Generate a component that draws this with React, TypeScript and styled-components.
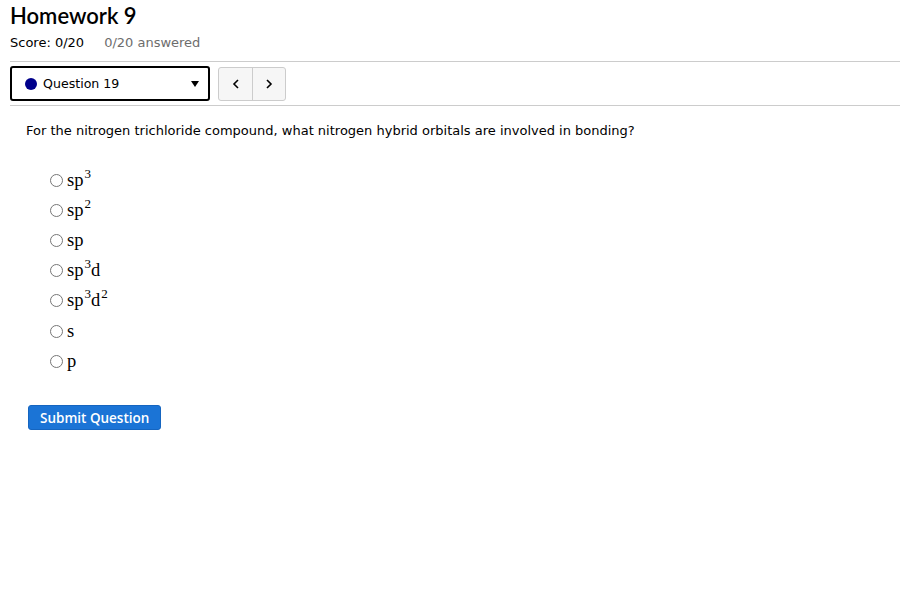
import React from "react";
import styled, { createGlobalStyle } from "styled-components";

const GlobalStyle = createGlobalStyle`
  html, body {
    margin: 0;
    padding: 0;
    background: #fff;
  }
  body {
    font-family: "DejaVu Sans", Verdana, sans-serif;
    color: #000;
  }
`;

const options = [
  { base: "sp", sup: "3" },
  { base: "sp", sup: "2" },
  { base: "sp" },
  { base: "sp", sup: "3", tail: "d" },
  { base: "sp", sup: "3", tail: "d", tailSup: "2" },
  { base: "s" },
  { base: "p" },
];

export default function App() {
  return (
    <>
      <GlobalStyle />
      <SPage>
        <STitle>Homework 9</STitle>
        <SScoreRow>
          <span>Score: 0/20</span>
          <SAnswered>0/20 answered</SAnswered>
        </SScoreRow>
        <SToolbar>
          <SSelect>
            <SDot />
            <SSelectLabel>Question 19</SSelectLabel>
            <SCaret />
          </SSelect>
          <SNavGroup>
            <SNavButton aria-label="previous">
              <svg width="8" height="10" viewBox="0 0 8 10">
                <path d="M6 1 L2 5 L6 9" fill="none" stroke="#000" strokeWidth="1.6" />
              </svg>
            </SNavButton>
            <SNavButton $last aria-label="next">
              <svg width="8" height="10" viewBox="0 0 8 10">
                <path d="M2 1 L6 5 L2 9" fill="none" stroke="#000" strokeWidth="1.6" />
              </svg>
            </SNavButton>
          </SNavGroup>
        </SToolbar>
        <SQuestion>
          <SPrompt>
            For the nitrogen trichloride compound, what nitrogen hybrid orbitals are involved in bonding?
          </SPrompt>
          <SOptions>
            {options.map((o, i) => (
              <SOption key={i}>
                <SRadio type="radio" name="q19" />
                <SMath>
                  {o.base}
                  {o.sup && <sup>{o.sup}</sup>}
                  {o.tail}
                  {o.tailSup && <sup>{o.tailSup}</sup>}
                </SMath>
              </SOption>
            ))}
          </SOptions>
          <SSubmit>Submit Question</SSubmit>
        </SQuestion>
      </SPage>
    </>
  );
}

const SPage = styled.div`
  padding: 0 0 0 10px;
`;

const STitle = styled.h1`
  margin: 0;
  padding-top: 3px;
  font-family: Lato, sans-serif;
  font-size: 22px;
  font-weight: 600;
  line-height: 26px;
`;

const SScoreRow = styled.div`
  display: flex;
  gap: 20px;
  margin-top: 6px;
  font-size: 13px;
  line-height: 16px;
  padding-bottom: 10px;
  border-bottom: 1px solid #ccc;
`;

const SAnswered = styled.span`
  color: #6d6d6d;
`;

const SToolbar = styled.div`
  display: flex;
  align-items: center;
  gap: 8px;
  padding: 4px 0 4px;
  border-bottom: 1px solid #ccc;
`;

const SSelect = styled.div`
  display: flex;
  align-items: center;
  box-sizing: border-box;
  width: 200px;
  height: 35px;
  padding: 0 9px 0 13px;
  border: 2px solid #000;
  border-radius: 3px;
`;

const SDot = styled.span`
  width: 12px;
  height: 12px;
  border-radius: 50%;
  background: #00008b;
  margin-right: 6px;
`;

const SSelectLabel = styled.span`
  flex: 1;
  font-size: 12.6px;
`;

const SCaret = styled.span`
  width: 0;
  height: 0;
  border-left: 4px solid transparent;
  border-right: 4px solid transparent;
  border-top: 6px solid #000;
`;

const SNavGroup = styled.div`
  display: flex;
  border: 1px solid #ccc;
  border-radius: 3px;
  background: #f6f6f6;
`;

const SNavButton = styled.button<{ $last?: boolean }>`
  display: flex;
  align-items: center;
  justify-content: center;
  width: 33px;
  height: 32px;
  padding: 0;
  border: 0;
  border-left: ${({ $last }) => ($last ? "1px solid #ccc" : "0")};
  background: transparent;
`;

const SQuestion = styled.div`
  padding: 16px 0 0 16px;
`;

const SPrompt = styled.p`
  margin: 0;
  font-size: 13px;
  line-height: 18px;
`;

const SOptions = styled.div`
  display: flex;
  flex-direction: column;
  margin: 25px 0 0 23px;
`;

const SOption = styled.label`
  display: flex;
  align-items: center;
  height: 30.2px;
`;

const SRadio = styled.input`
  margin: 0 4px 0 1px;
  width: 13px;
  height: 13px;
`;

const SMath = styled.span`
  font-family: "Liberation Serif", serif;
  font-size: 18.5px;
  sup {
    font-size: 13px;
    vertical-align: 8px;
    line-height: 0;
    margin-left: 1px;
  }
`;

const SSubmit = styled.button`
  margin-top: 29px;
  margin-left: 2px;
  height: 25px;
  padding: 0 11px;
  border: 1px solid #1565c0;
  border-radius: 3px;
  background: #1b74d6;
  color: #fff;
  font-family: "Open Sans", sans-serif;
  font-size: 13.5px;
  font-weight: 600;
`;
